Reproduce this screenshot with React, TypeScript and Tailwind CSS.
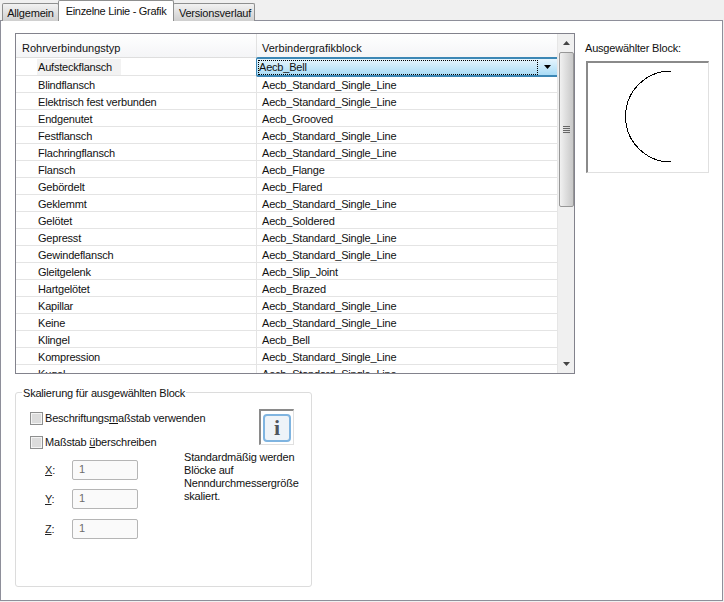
import React from 'react';

const STD = 'Aecb_Standard_Single_Line';

const rows: [string, string][] = [
  ['Blindflansch', STD],
  ['Elektrisch fest verbunden', STD],
  ['Endgenutet', 'Aecb_Grooved'],
  ['Festflansch', STD],
  ['Flachringflansch', STD],
  ['Flansch', 'Aecb_Flange'],
  ['Gebördelt', 'Aecb_Flared'],
  ['Geklemmt', STD],
  ['Gelötet', 'Aecb_Soldered'],
  ['Gepresst', STD],
  ['Gewindeflansch', STD],
  ['Gleitgelenk', 'Aecb_Slip_Joint'],
  ['Hartgelötet', 'Aecb_Brazed'],
  ['Kapillar', STD],
  ['Keine', STD],
  ['Klingel', 'Aecb_Bell'],
  ['Kompression', STD],
  ['Kugel', STD],
];

const Check: React.FC<{ children: React.ReactNode }> = ({ children }) => (
  <label className="flex items-center gap-[2px] h-[13px]">
    <span className="w-[13px] h-[13px] border border-[#8e8f8f] bg-[#dcdcdc] shadow-[inset_0_0_0_1px_#f4f4f4]" />
    <span>{children}</span>
  </label>
);

const ScaleInput: React.FC<{ letter: string }> = ({ letter }) => (
  <div className="flex items-center h-[20px]">
    <span className="w-[27px] text-[#222]"><u>{letter}</u>:</span>
    <div className="w-[66px] h-[20px] border border-[#b5b5b5] rounded-[2px] bg-[#fafafa] pl-[6px] leading-[17px] text-[#6d6d6d]">1</div>
  </div>
);

const App: React.FC = () => {
  return (
    <div className="w-[724px] h-[602px] bg-[#f0f0f0] flex flex-col text-[11px] tracking-[-0.2px] text-[#111] font-['Liberation_Sans',sans-serif] overflow-hidden">
      {/* Tabs */}
      <div className="flex h-[21px] items-end pl-[2px] relative z-10">
        <div className="h-[18px] w-[57px] border border-[#8e8f8f] border-b-0 rounded-t-[2px] bg-gradient-to-b from-[#f2f2f2] to-[#cfcfcf] text-center leading-[18px]">Allgemein</div>
        <div className="h-[21px] w-[116px] border border-[#8e8f8f] border-b-0 rounded-t-[2px] bg-white text-center leading-[20px] tracking-[-0.3px] -mx-[1px] relative">Einzelne Linie - Grafik</div>
        <div className="h-[18px] w-[82px] pl-[2px] border border-[#8e8f8f] border-b-0 rounded-t-[2px] bg-gradient-to-b from-[#f2f2f2] to-[#cfcfcf] text-center leading-[18px]">Versionsverlauf</div>
      </div>

      {/* Page */}
      <div className="flex-1 mb-[1px] mr-[1px] border border-[#8e8f9a] bg-white -mt-px pl-[14px] pt-[12px]">
        <div className="flex items-start">
          {/* Table */}
          <div className="w-[560px] h-[341px] border border-[#82828c] flex overflow-hidden">
            <div className="w-[541px]">
              <div className="flex h-[24px] border-b border-[#dedede] bg-gradient-to-b from-white to-[#f4f5f7] tracking-normal">
                <div className="w-[241px] pl-[6px] pt-[6px] border-r border-[#e2e2e2]">Rohrverbindungstyp</div>
                <div className="pl-[5px] pt-[6px]">Verbindergrafikblock</div>
              </div>
              <div className="flex h-[18px]">
                <div className="w-[240px] pl-[21px] border-b border-[#e4e4e4]">
                  <div className="bg-[#f2f2f2] w-[84px] h-[16px] mt-px pl-px leading-[16px]">Aufsteckflansch</div>
                </div>
                <div className="relative z-10 w-[301px] h-[20px] -mt-px flex items-center border-y-2 border-l border-[#3c87b5] rounded-l-[2px] bg-gradient-to-b from-[#e6f5fd] to-[#a9dcf6]">
                  <span className="w-[280px] ml-[1px] h-[15px] border border-dotted border-black leading-[13px]">Aecb_Bell</span>
                  <span className="flex-1 flex justify-center">
                    <svg width="7" height="4" viewBox="0 0 7 4"><path d="M0 0h7L3.5 4z" fill="#000" /></svg>
                  </span>
                </div>
              </div>
              {rows.map(([type, block]) => (
                <div key={type} className="flex h-[17px] border-b border-[#e4e4e4] leading-[18px]">
                  <div className="w-[241px] pl-[22px] border-r border-[#e4e4e4]">{type}</div>
                  <div className="pl-[5px]">{block}</div>
                </div>
              ))}
            </div>
            {/* Scrollbar */}
            <div className="w-[17px] bg-[#f0f0f0] flex flex-col items-center border-l border-[#e6e6e6]">
              <div className="h-[18px] flex items-center justify-center">
                <svg width="7" height="4" viewBox="0 0 7 4"><path d="M3.5 0L7 4H0z" fill="#444" /></svg>
              </div>
              <div className="w-[15px] h-[155px] rounded-[2px] border border-[#979797] bg-gradient-to-r from-[#f1f1f1] to-[#c8c8c8] flex flex-col items-center justify-center gap-px">
                <span className="w-[7px] h-px bg-[#666]" />
                <span className="w-[7px] h-px bg-[#666]" />
                <span className="w-[7px] h-px bg-[#666]" />
                <span className="w-[7px] h-px bg-[#666]" />
              </div>
              <div className="flex-1" />
              <div className="h-[18px] flex items-center justify-center">
                <svg width="7" height="4" viewBox="0 0 7 4"><path d="M0 0h7L3.5 4z" fill="#444" /></svg>
              </div>
            </div>
          </div>

          {/* Preview */}
          <div className="ml-[11px] pt-[9px]">
            <div className="h-[12px] leading-[12px] mb-[7px] -ml-px">Ausgewählter Block:</div>
            <div className="w-[123px] h-[112px] border-t-[2px] border-l-[2px] border-t-[#8a8a8a] border-l-[#8a8a8a] border-r border-b border-r-[#e0e0e0] border-b-[#e0e0e0] bg-white">
              <svg width="120" height="108" viewBox="0 0 120 108" shapeRendering="crispEdges">
                <path d="M83 8 A45.5 45.5 0 0 0 83 99" fill="none" stroke="#000" strokeWidth="1" />
              </svg>
            </div>
          </div>
        </div>

        {/* Scale group */}
        <div className="w-[297px] h-[195px] mt-[18px] border border-[#dcdcdc] rounded-[3px] relative pl-[14px] pt-[19px]">
          <span className="absolute -top-[6px] left-[6px] bg-white px-px leading-[12px]">Skalierung für ausgewählten Block</span>
          <div className="w-[229px]">
            <Check>Beschriftungs<u>m</u>aßstab verwenden</Check>
            <div className="h-[11px]" />
            <Check>Maßstab <u>ü</u>berschreiben</Check>
            <div className="flex flex-col gap-[9px] mt-[11px] pl-[15px]">
              <ScaleInput letter="X" />
              <ScaleInput letter="Y" />
              <div className="mt-px">
                <ScaleInput letter="Z" />
              </div>
            </div>
          </div>
          <div className="absolute left-[168px] top-[16px] w-[120px]">
            <div className="ml-[75px] w-[35px] h-[36px] border-t-[2px] border-l-[2px] border-t-[#8a8a8a] border-l-[#8a8a8a] border-r border-b border-r-[#e0e0e0] border-b-[#e0e0e0] flex items-center justify-center">
              <div className="w-[28px] h-[28px] rounded-[4px] border-[2px] border-[#7fb4e0] bg-[#eef3f8] flex items-center justify-center text-[22px] font-bold leading-none text-[#50555c] font-['Liberation_Serif',serif]">i</div>
            </div>
            <div className="mt-[6px] leading-[13px]">Standardmäßig werden<br />Blöcke auf<br />Nenndurchmessergröße<br />skaliert.</div>
          </div>
        </div>
      </div>
    </div>
  );
};

export default App;
